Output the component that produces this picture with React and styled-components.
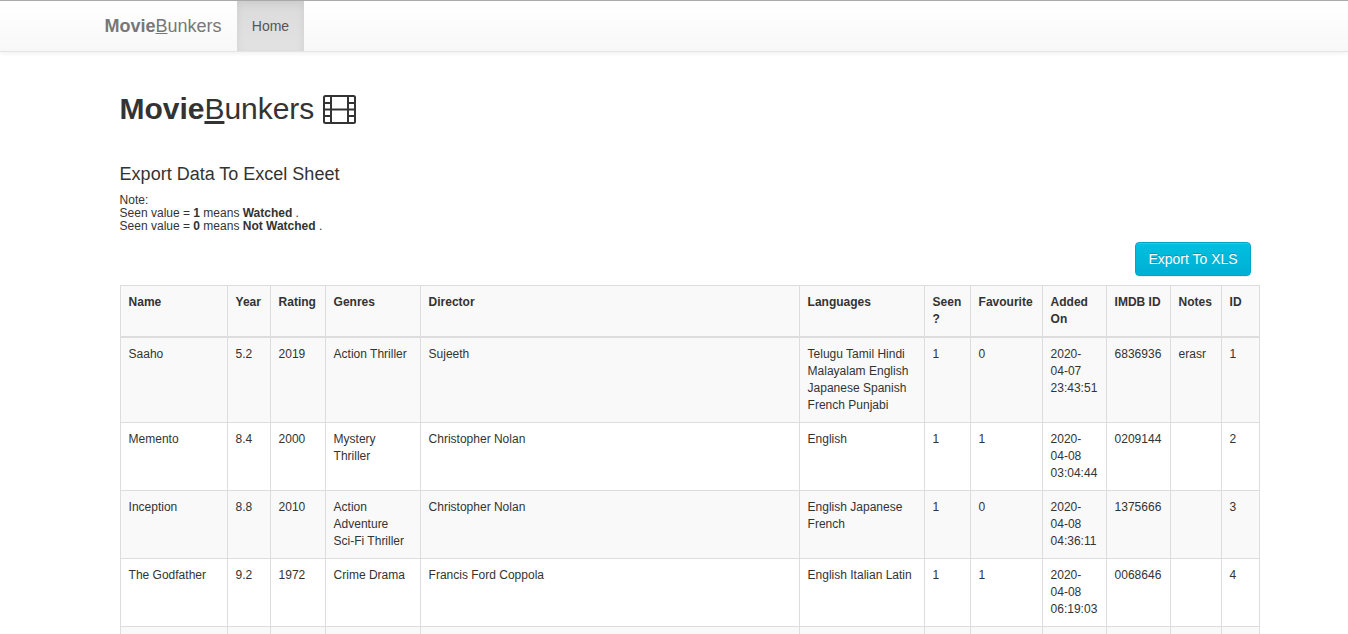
import React from "react";
import styled, { createGlobalStyle } from "styled-components";

const GlobalStyle = createGlobalStyle`
  *, *::before, *::after { box-sizing: border-box; }
  html, body { height: 100%; overflow: hidden; }
  body {
    margin: 0;
    background: #fff;
    color: #333;
    font: 12px/17px Arial, "Liberation Sans", sans-serif;
  }
  #root { height: 100%; overflow: hidden; }
`;

const Navbar = styled.nav`
  display: flex;
  height: 52px;
  padding-left: 89px;
  border-top: 1px solid #a9a9a9;
  border-bottom: 1px solid #e4e4e4;
  background: linear-gradient(to bottom, #fff 0%, #f8f8f8 100%);
  box-shadow: 0 1px 5px rgba(0, 0, 0, 0.075);
`;

const Brand = styled.a`
  width: 148px;
  padding: 15px;
  padding-left: 15.5px;
  color: #777;
  font-size: 18px;
  line-height: 20px;
  white-space: nowrap;
`;

const NavLink = styled.a`
  width: 67px;
  padding: 15px 0;
  color: #555;
  font-size: 14px;
  line-height: 20px;
  text-align: center;
  background: linear-gradient(to bottom, #dbdbdb 0%, #e2e2e2 100%);
  box-shadow: inset 0 3px 9px rgba(0, 0, 0, 0.075);
`;

const Page = styled.main`
  width: 1140px;
  margin-left: 120px;
`;

const Intro = styled.header`
  margin-left: -0.4px;
`;

const Title = styled.h1`
  display: flex;
  align-items: center;
  gap: 9px;
  height: 33px;
  margin: 40px 0 0;
  font-size: 30px;
  font-weight: 400;
  line-height: 33px;
  letter-spacing: -0.04px;
`;

const FilmSvg = styled.svg`
  display: block;
  width: 33px;
  height: 29px;
  margin-top: 1px;
`;

const Heading = styled.h2`
  margin: 39px 0 0;
  font-size: 18px;
  font-weight: 400;
  line-height: 20px;
`;

const Note = styled.p`
  margin: 10px 0 0;
  line-height: 13px;
`;

const Actions = styled.div`
  display: flex;
  justify-content: flex-end;
  margin: 9px 9px 9px 0;
`;

const ExportButton = styled.button`
  width: 116px;
  height: 34px;
  padding: 0;
  border: 1px solid #00a5c6;
  border-radius: 4px;
  color: #fff;
  font: 14px/20px Arial, "Liberation Sans", sans-serif;
  text-shadow: 0 -1px 0 rgba(0, 0, 0, 0.2);
  background: linear-gradient(to bottom, #00bfdf 0%, #00afd5 100%);
  box-shadow: inset 0 1px 0 rgba(255, 255, 255, 0.15), 0 1px 1px rgba(0, 0, 0, 0.075);
`;

const Table = styled.table`
  width: 1140px;
  table-layout: fixed;
  border-collapse: collapse;
  border: 1px solid #ddd;
`;

const HeadCell = styled.th`
  padding: 8px 8px 8px 7.6px;
  border: 1px solid #ddd;
  border-bottom-width: 2px;
  background: #f9f9f9;
  text-align: left;
  vertical-align: top;
`;

const Row = styled.tr`
  background: #fff;
  &:nth-child(odd) { background: #f9f9f9; }
`;

const Cell = styled.td`
  height: 68px;
  padding: 8px 8px 8px 7.6px;
  border: 1px solid #ddd;
  vertical-align: top;
`;

const Column = styled.col`
  width: ${(p) => p.$width}px;
`;

const columns = [
  ["Name", 107],
  ["Year", 43],
  ["Rating", 55],
  ["Genres", 95],
  ["Director", 379],
  ["Languages", 125],
  ["Seen ?", 46],
  ["Favourite", 72],
  ["Added On", 64],
  ["IMDB ID", 64],
  ["Notes", 51],
  ["ID", 38],
];

const movies = [
  ["Saaho", "5.2", "2019", "Action Thriller", "Sujeeth", "Telugu Tamil Hindi Malayalam English Japanese Spanish French Punjabi", "1", "0", "2020-04-07 23:43:51", "6836936", "erasr", "1"],
  ["Memento", "8.4", "2000", "Mystery Thriller", "Christopher Nolan", "English", "1", "1", "2020-04-08 03:04:44", "0209144", "", "2"],
  ["Inception", "8.8", "2010", "Action Adventure Sci-Fi Thriller", "Christopher Nolan", "English Japanese French", "1", "0", "2020-04-08 04:36:11", "1375666", "", "3"],
  ["The Godfather", "9.2", "1972", "Crime Drama", "Francis Ford Coppola", "English Italian Latin", "1", "1", "2020-04-08 06:19:03", "0068646", "", "4"],
  ["", "", "", "", "", "", "", "", "", "", "", ""],
];

const BrandName = () => (
  <span><b>Movie</b><u>B</u>unkers</span>
);

const FilmIcon = () => (
  <FilmSvg viewBox="0 0 33 29" fill="none" stroke="#333" strokeWidth="2">
    <rect x="1" y="1" width="31" height="27" rx="1.5" />
    <path d="M8 1v27M25 1v27M8 14.5h17" />
    <path d="M1 8h7M1 14.5h7M1 21h7M25 8h7M25 14.5h7M25 21h7" />
  </FilmSvg>
);

export default function App() {
  return (
    <>
      <GlobalStyle />
      <Navbar>
        <Brand><BrandName /></Brand>
        <NavLink>Home</NavLink>
      </Navbar>
      <Page>
        <Intro>
          <Title><BrandName /><FilmIcon /></Title>
          <Heading>Export Data To Excel Sheet</Heading>
          <Note>
            Note:<br />
            Seen value = <b>1</b> means <b>Watched</b> .<br />
            Seen value = <b>0</b> means <b>Not Watched</b> .
          </Note>
        </Intro>
        <Actions><ExportButton>Export To XLS</ExportButton></Actions>
        <Table>
          <colgroup>
            {columns.map(([name, width]) => <Column key={name} $width={width} />)}
          </colgroup>
          <thead>
            <tr>{columns.map(([name]) => <HeadCell key={name}>{name}</HeadCell>)}</tr>
          </thead>
          <tbody>
            {movies.map((movie, i) => (
              <Row key={i}>
                {movie.map((value, j) => <Cell key={j}>{value}</Cell>)}
              </Row>
            ))}
          </tbody>
        </Table>
      </Page>
    </>
  );
}
